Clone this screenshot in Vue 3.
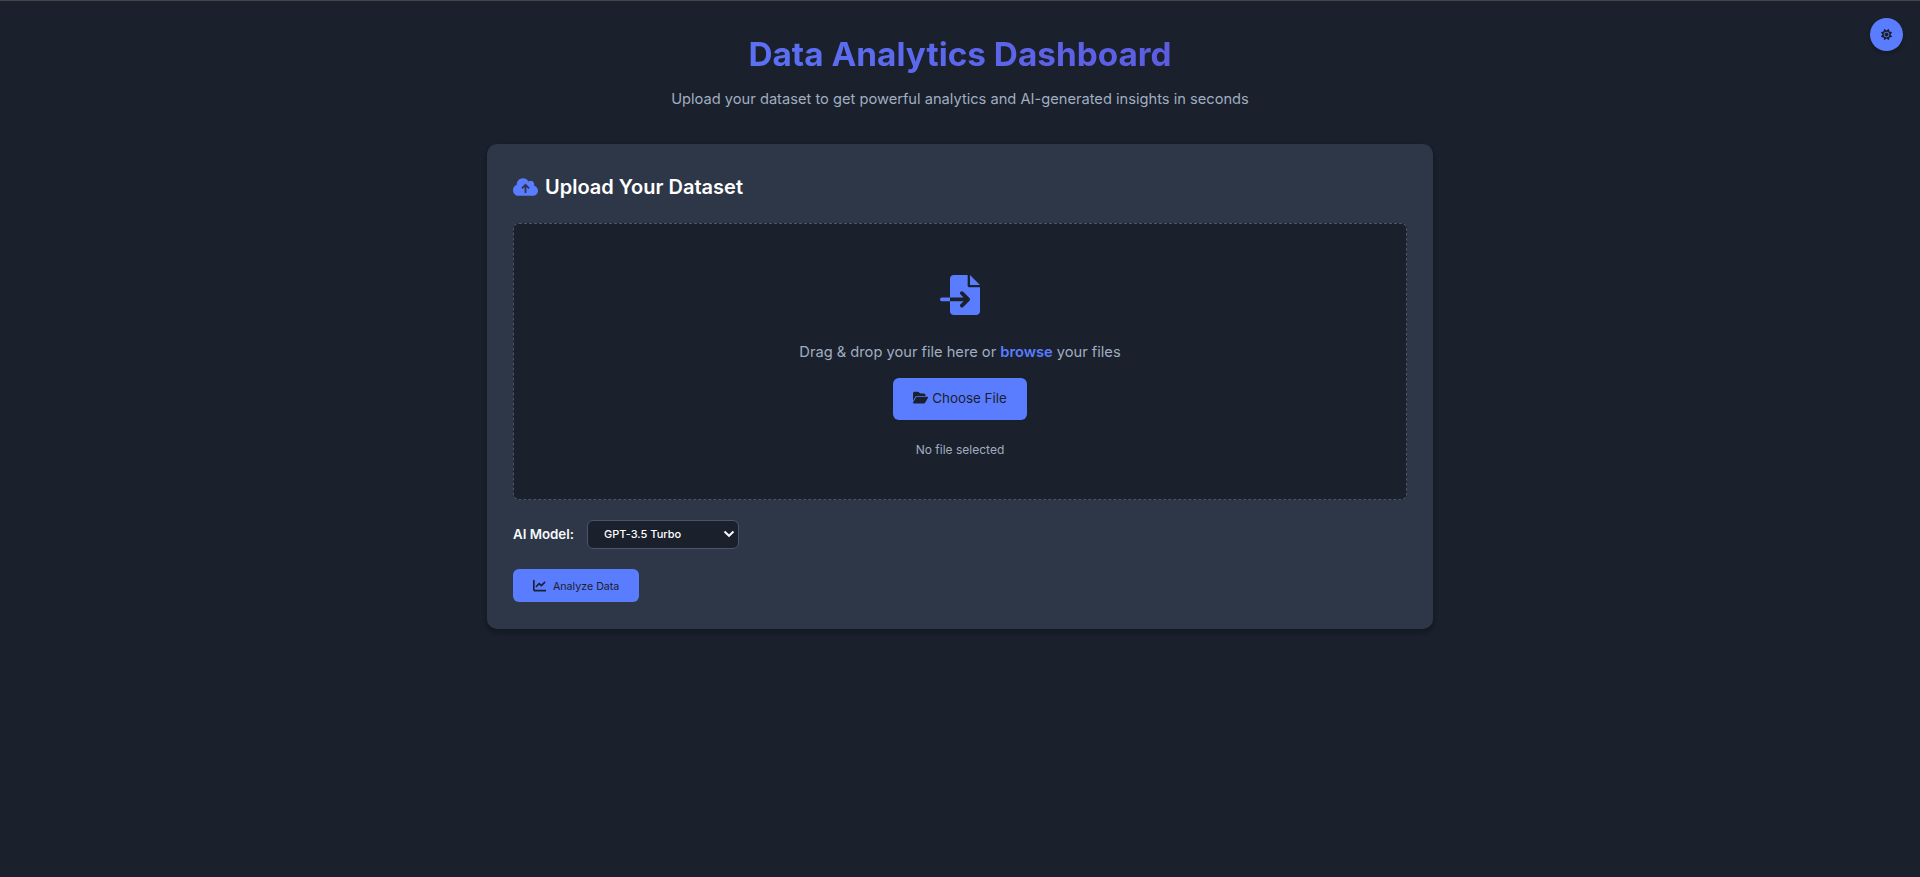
<script setup>
import { ref } from 'vue'

const model = ref('gpt-3.5')
const fileName = ref('No file selected')
</script>

<template>
  <div class="page">
    <button class="theme-toggle" aria-label="Toggle theme">
      <svg viewBox="0 0 512 512"><path d="M361.5 1.2c5 2.1 8.6 6.6 9.6 11.9L391 121l107.900 19.800c5.300 1 9.800 4.600 11.900 9.600s1.500 10.700-1.600 15.200L446.900 256l62.300 90.300c3.100 4.500 3.700 10.200 1.600 15.200s-6.600 8.600-11.900 9.600L391 391 371.100 498.900c-1 5.300-4.600 9.800-9.600 11.900s-10.700 1.500-15.200-1.600L256 446.900l-90.300 62.300c-4.500 3.100-10.200 3.700-15.200 1.600s-8.600-6.600-9.600-11.900L121 391 13.100 371.100c-5.300-1-9.800-4.600-11.900-9.600s-1.500-10.700 1.600-15.200L65.100 256 2.800 165.700c-3.100-4.500-3.700-10.200-1.600-15.200s6.600-8.600 11.900-9.600L121 121 140.900 13.100c1-5.300 4.600-9.800 9.600-11.900s10.700-1.500 15.200 1.600L256 65.100 346.300 2.800c4.500-3.100 10.200-3.700 15.200-1.600zM160 256a96 96 0 1 1 192 0 96 96 0 1 1 -192 0zm224 0a128 128 0 1 0 -256 0 128 128 0 1 0 256 0z" /></svg>
    </button>

    <header class="header">
      <h1>Data Analytics Dashboard</h1>
      <p>Upload your dataset to get powerful analytics and AI-generated insights in seconds</p>
    </header>

    <main class="card">
      <h2>
        <svg class="cloud" viewBox="0 0 640 512"><path d="M144 480C64.5 480 0 415.500 0 336c0-62.800 40.200-116.200 96.200-135.900c-.1-2.700-.2-5.400-.2-8.100c0-88.400 71.600-160 160-160c59.300 0 111 32.200 138.700 80.200C409.900 102 428.300 96 448 96c53 0 96 43 96 96c0 12.200-2.300 23.800-6.400 34.600C596 238.400 640 290.100 640 352c0 70.700-57.300 128-128 128H144zm79-217c-9.400 9.400-9.400 24.600 0 33.900s24.600 9.400 33.900 0l39-39V392c0 13.300 10.700 24 24 24s24-10.700 24-24V257.900l39 39c9.400 9.400 24.600 9.400 33.900 0s9.400-24.600 0-33.900l-80-80c-9.400-9.400-24.600-9.400-33.900 0l-80 80z" /></svg>
        <span>Upload Your Dataset</span>
      </h2>

      <section class="dropzone">
        <svg class="import" viewBox="0 0 512 512"><path d="M128 48c0-26.500 21.500-48 48-48H354V134c0 13.300 10.700 24 24 24H512V464c0 26.500-21.500 48-48 48H176c-26.500 0-48-21.500-48-48V336H302.100l-39 39c-9.400 9.400-9.400 24.600 0 33.900s24.600 9.400 33.900 0l80-80c9.400-9.400 9.400-24.600 0-33.900l-80-80c-9.400-9.400-24.600-9.400-33.900 0s-9.400 24.600 0 33.900l39 39H128V48zm0 240v48H24c-13.300 0-24-10.700-24-24s10.700-24 24-24H128zM512 128H384V0L512 128z" /></svg>
        <p class="hint">Drag &amp; drop your file here or <b>browse</b> your files</p>
        <button class="choose">
          <svg viewBox="0 0 576 512"><path d="M88.700 223.800L0 375.800V96C0 60.700 28.700 32 64 32H181.500c17 0 33.300 6.700 45.300 18.700l26.500 26.500c12 12 28.300 18.700 45.300 18.700H416c35.300 0 64 28.700 64 64v32H144c-22.800 0-43.800 12.100-55.300 31.800zm27.600 16.100C122.100 230 132.600 224 144 224H544c11.500 0 22 6.100 27.700 16.100s5.700 22.200-.1 32.100l-112 192C453.900 474 443.400 480 432 480H32c-11.500 0-22-6.100-27.700-16.100s-5.700-22.200 .1-32.100l112-192z" /></svg>
          <span>Choose File</span>
        </button>
        <p class="file-name">{{ fileName }}</p>
      </section>

      <div class="model-row">
        <label for="model">AI Model:</label>
        <div class="select-wrap">
          <select id="model" v-model="model">
            <option value="gpt-3.5">GPT-3.5 Turbo</option>
            <option value="gpt-4">GPT-4</option>
          </select>
          <svg class="chevron" viewBox="0 0 12 8"><path d="M1.500 1.500 6 5.800l4.500-4.300" /></svg>
        </div>
      </div>

      <button class="analyze">
        <svg viewBox="0 0 512 512"><path d="M64 64c0-17.700-14.300-32-32-32S0 46.300 0 64V400c0 44.200 35.800 80 80 80H480c17.700 0 32-14.300 32-32s-14.300-32-32-32H80c-8.800 0-16-7.200-16-16V64zm406.600 86.600c12.500-12.500 12.500-32.800 0-45.300s-32.800-12.500-45.300 0L320 210.700l-57.400-57.400c-12.500-12.500-32.800-12.500-45.300 0l-112 112c-12.500 12.500-12.500 32.800 0 45.300s32.800 12.500 45.300 0L240 221.300l57.400 57.400c12.500 12.500 32.800 12.500 45.300 0l128-128z" /></svg>
        <span>Analyze Data</span>
      </button>
    </main>
  </div>
</template>

<style>
body {
  background: #1a202c;
}
</style>

<style scoped>
.page {
  box-sizing: border-box;
  min-height: 877px;
  padding-top: 30px;
  border-top: 1px solid #454746;
  background: #1a202c;
  color: #f7fafc;
  font-family: Inter, "Liberation Sans", sans-serif;
}

h1, h2, p {
  margin: 0;
}

button, select {
  font-family: inherit;
}

button {
  border: 0;
  padding: 0;
  background: #5a7dff;
  color: #1a202c;
}

svg {
  display: block;
  flex: none;
  fill: currentColor;
}

.theme-toggle {
  position: absolute;
  top: 18px;
  right: 17px;
  width: 33px;
  height: 33px;
  display: flex;
  align-items: center;
  justify-content: center;
  border-radius: 50%;
  box-shadow: 0 3px 4px rgba(0, 0, 0, 0.2);
}

.theme-toggle svg {
  width: 11px;
  height: 11px;
}

.header {
  width: 946px;
  margin: 0 auto;
  text-align: center;
}

h1 {
  height: 46px;
  line-height: 46px;
  font-size: 33.333px;
  font-weight: 700;
  background: linear-gradient(90deg, #5a7dff, #5e50d6);
  background-clip: text;
  -webkit-background-clip: text;
  color: transparent;
}

.header p {
  margin-top: 10px;
  line-height: 24px;
  font-size: 14.667px;
  color: #a0aec0;
}

.card {
  box-sizing: border-box;
  width: 946px;
  height: 485px;
  margin: 33px auto 0;
  padding: 26px;
  border-radius: 10px;
  background: #2d3748;
  box-shadow: 0 3px 5px rgba(0, 0, 0, 0.3);
}

h2 {
  display: flex;
  align-items: center;
  gap: 7px;
  height: 34px;
  font-size: 20px;
  font-weight: 600;
  color: #fff;
}

.cloud {
  width: 25px;
  height: 20px;
  color: #5a7dff;
}

.dropzone {
  box-sizing: border-box;
  height: 277px;
  margin-top: 19px;
  padding-top: 51px;
  display: flex;
  flex-direction: column;
  align-items: center;
  border: 1px dashed #4a5568;
  border-radius: 6px;
  background: #1a202c;
  color: #a0aec0;
}

.import {
  width: 40px;
  height: 40px;
  color: #5a7dff;
}

.hint {
  margin-top: 25px;
  line-height: 24px;
  font-size: 14.667px;
}

.hint b {
  font-weight: 600;
  color: #5a7dff;
}

.choose {
  box-sizing: border-box;
  width: 134px;
  height: 42px;
  margin-top: 14px;
  padding-bottom: 2px;
  display: flex;
  align-items: center;
  justify-content: center;
  gap: 4px;
  border-radius: 6px;
  font-size: 13.400px;
}

.choose svg {
  width: 15px;
  height: 13.300px;
}

.file-name {
  margin-top: 20px;
  line-height: 20px;
  font-size: 12px;
}

.model-row {
  display: flex;
  align-items: center;
  gap: 13px;
  margin-top: 20px;
}

label {
  padding-bottom: 1px;
  font-size: 13.300px;
  font-weight: 600;
}

.select-wrap {
  position: relative;
}

select {
  display: block;
  box-sizing: border-box;
  width: 152px;
  height: 29px;
  padding: 0 16px 2px;
  appearance: none;
  border: 1px solid #4a5568;
  border-radius: 6px;
  background: #1a202c;
  color: #fff;
  font-size: 11px;
  font-weight: 500;
}

.chevron {
  position: absolute;
  right: 4px;
  top: 10px;
  width: 12px;
  height: 8px;
  fill: none;
  stroke: #f7fafc;
  stroke-width: 2;
}

.analyze {
  width: 126px;
  height: 33px;
  margin-top: 20px;
  display: flex;
  align-items: center;
  justify-content: center;
  gap: 7px;
  border-radius: 6px;
  font-size: 10.667px;
}

.analyze span {
  padding-top: 2px;
}

.analyze svg {
  width: 13.300px;
  height: 13.300px;
}
</style>
